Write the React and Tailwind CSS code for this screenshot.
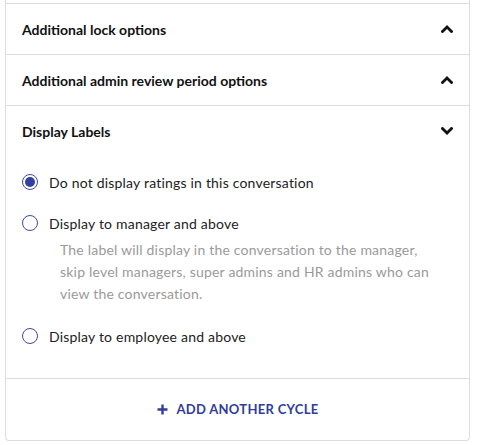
import React, { useState } from 'react';

const font = { fontFamily: 'Lato, "Open Sans", sans-serif' };

const Chevron = ({ up }) => (
  <svg width="12" height="8" viewBox="0 0 12 8" className="shrink-0">
    <path
      d={up ? 'M1.5 6.5 L6 2 L10.5 6.5' : 'M1.5 1.5 L6 6 L10.5 1.5'}
      fill="none"
      stroke="#111"
      strokeWidth="2.8"
      strokeLinecap="square"
    />
  </svg>
);

const Radio = ({ checked }) => (
  <span className="w-4 h-4 rounded-full border border-[#3b4aa8] flex items-center justify-center shrink-0 bg-white">
    {checked && <span className="w-[10px] h-[10px] rounded-full bg-[#3240a0]" />}
  </span>
);

const options = [
  { id: 'none', label: 'Do not display ratings in this conversation' },
  {
    id: 'manager',
    label: 'Display to manager and above',
    hint: 'The label will display in the conversation to the manager, skip level managers, super admins and HR admins who can view the conversation.',
  },
  { id: 'employee', label: 'Display to employee and above' },
];

const SectionHeader = ({ title, up }) => (
  <div className="h-[51px] flex items-center justify-between px-4 border-t border-[#dcdce2]">
    <span className="text-[14px] font-bold text-[#111]">{title}</span>
    <Chevron up={up} />
  </div>
);

export default function App() {
  const [value, setValue] = useState('none');

  return (
    <div className="bg-white min-h-screen" style={font}>
      <div className="ml-[5px] w-[465px] pt-[3px] border-x border-b border-[#dcdce2] rounded-b-[4px]">
        <SectionHeader title="Additional lock options" up />
        <SectionHeader title="Additional admin review period options" up />
        <SectionHeader title="Display Labels" />

        <div className="pl-4 pt-4 pb-8 flex flex-col gap-[21px]">
          {options.map((o) => (
            <div key={o.id}>
              <label
                className="h-5 flex items-center gap-[11px] cursor-pointer"
                onClick={() => setValue(o.id)}
              >
                <Radio checked={value === o.id} />
                <span className="text-[14px] text-[#222] tracking-[0.2px]">{o.label}</span>
              </label>
              {o.hint && (
                <p className="mt-[6px] ml-[38px] pr-8 text-[14px] leading-[22px] text-[#9a9a9a] tracking-[0.2px]">
                  {o.hint}
                </p>
              )}
            </div>
          ))}
        </div>

        <div className="border-t border-[#dcdce2] h-[62px] flex items-center justify-center">
          <button className="flex items-center gap-[9px] text-[13px] font-bold text-[#2f3d9c] tracking-[0.3px]">
            <svg width="11" height="11" viewBox="0 0 11 11">
              <path d="M5.5 0.5 V10.5 M0.5 5.5 H10.5" stroke="#2f3d9c" strokeWidth="2.4" />
            </svg>
            ADD ANOTHER CYCLE
          </button>
        </div>
      </div>
    </div>
  );
}
